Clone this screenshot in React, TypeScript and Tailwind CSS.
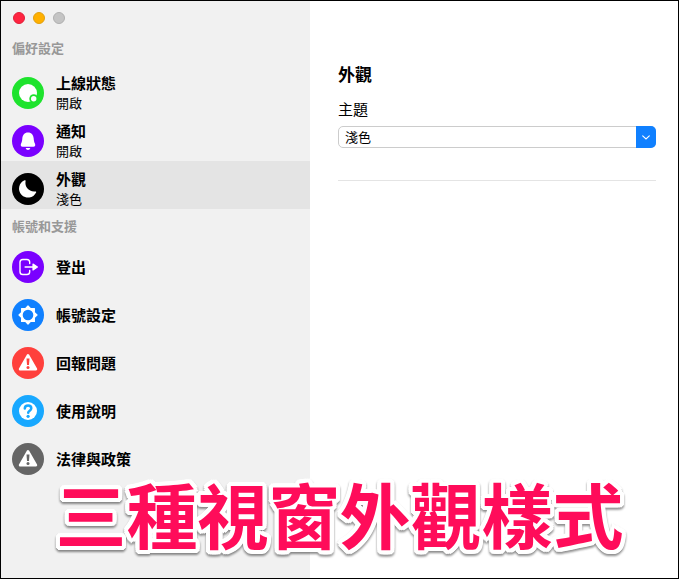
import { useState } from "react";
import type { ReactNode } from "react";

type SettingItem = {
  id: string;
  title: string;
  status?: string;
  color: string;
  icon: ReactNode;
};

const WarningIcon = () => (
  <svg viewBox="0 0 32 32" className="size-8" aria-hidden="true">
    <path
      d="M16 8.2 24 22.2H8Z"
      fill="white"
      stroke="white"
      strokeWidth="2.4"
      strokeLinejoin="round"
    />
    <path d="M14.5 11.5h3l-.5 6.6h-2z" fill="currentColor" />
    <circle cx="16" cy="20.5" r="1.5" fill="currentColor" />
  </svg>
);

const preferences: SettingItem[] = [
  {
    id: "active",
    title: "上線狀態",
    status: "開啟",
    color: "bg-[#1ee32d] text-[#1ee32d]",
    icon: (
      <svg viewBox="0 0 32 32" className="size-8" aria-hidden="true">
        <circle cx="16" cy="16" r="9" fill="white" />
        <circle cx="21.7" cy="21.7" r="4.4" fill="currentColor" />
        <circle cx="21.7" cy="21.7" r="2.7" fill="white" />
      </svg>
    ),
  },
  {
    id: "notifications",
    title: "通知",
    status: "開啟",
    color: "bg-[#7a00ff] text-[#7a00ff]",
    icon: (
      <svg viewBox="0 0 32 32" className="size-8" aria-hidden="true">
        <path
          d="M16 7.4c-3.6 0-5.5 2.6-5.7 6.2-.1 2.4-.5 3.5-1.2 5-.8 1.8-.3 3.2 1.5 3.2h10.8c1.8 0 2.3-1.4 1.5-3.2-.7-1.5-1.1-2.6-1.2-5-.2-3.6-2.1-6.2-5.7-6.2Z"
          fill="white"
        />
        <path d="M13.7 23h4.6c-.3 1.3-1.2 2-2.3 2s-2-.7-2.3-2Z" fill="white" />
      </svg>
    ),
  },
  {
    id: "appearance",
    title: "外觀",
    status: "淺色",
    color: "bg-black text-black",
    icon: (
      <svg viewBox="0 0 32 32" className="size-8" aria-hidden="true">
        <path
          d="M12.6 7.3c.6-.3 1.2.2 1 .8-1.2 5.9 3.4 11.2 9.8 10.4.6-.1 1 .5.7 1.1a9 9 0 1 1-11.5-12.3Z"
          fill="white"
        />
      </svg>
    ),
  },
];

const account: SettingItem[] = [
  {
    id: "logout",
    title: "登出",
    color: "bg-[#7a00ff] text-[#7a00ff]",
    icon: (
      <svg viewBox="0 0 32 32" className="size-8" aria-hidden="true">
        <path
          d="M17.7 12.5v-1.2c0-1.9-1-2.8-2.8-2.8h-4.1c-1.9 0-2.8 1-2.8 2.8v9.4c0 1.9 1 2.8 2.8 2.8h4.1c1.9 0 2.8-1 2.8-2.8v-1.2"
          fill="none"
          stroke="white"
          strokeWidth="1.4"
          strokeLinecap="round"
        />
        <path d="M13.2 16H22" stroke="white" strokeWidth="1.6" strokeLinecap="round" />
        <path
          d="m21 13 4.4 3-4.4 3Z"
          fill="white"
          stroke="white"
          strokeWidth="1.2"
          strokeLinejoin="round"
        />
      </svg>
    ),
  },
  {
    id: "settings",
    title: "帳號設定",
    color: "bg-[#1080ff] text-[#1080ff]",
    icon: (
      <svg viewBox="0 0 32 32" className="size-8" aria-hidden="true">
        <path
          d="m16 7 2.6 2.7 3.8-.1-.1 3.8L25 16l-2.7 2.6.1 3.8-3.8-.1L16 25l-2.6-2.7-3.8.1.1-3.8L7 16l2.7-2.6-.1-3.8 3.8.1Z"
          fill="white"
          stroke="white"
          strokeWidth="1.2"
          strokeLinejoin="round"
        />
        <circle cx="16" cy="16" r="5.3" fill="currentColor" />
      </svg>
    ),
  },
  {
    id: "report",
    title: "回報問題",
    color: "bg-[#ff403c] text-[#ff403c]",
    icon: <WarningIcon />,
  },
  {
    id: "help",
    title: "使用說明",
    color: "bg-[#18a8ff] text-[#18a8ff]",
    icon: (
      <svg viewBox="0 0 32 32" className="size-8" aria-hidden="true">
        <circle cx="16" cy="16" r="9" fill="white" />
        <path
          d="M12.8 13.5c0-1.9 1.4-3 3.3-3 1.8 0 3.2 1.1 3.2 2.8 0 2.4-3.1 2.3-3.1 4.5"
          fill="none"
          stroke="currentColor"
          strokeWidth="2.5"
          strokeLinecap="round"
        />
        <circle cx="16.1" cy="21.3" r="1.6" fill="currentColor" />
      </svg>
    ),
  },
  {
    id: "legal",
    title: "法律與政策",
    color: "bg-[#656565] text-[#656565]",
    icon: <WarningIcon />,
  },
];

function SettingRow({
  item,
  selected,
  onSelect,
}: {
  item: SettingItem;
  selected: boolean;
  onSelect: () => void;
}) {
  return (
    <li>
      <button
        type="button"
        onClick={onSelect}
        className={`flex h-12 w-full gap-3 pl-[11px] text-left ${
          item.status ? "items-end" : "items-center"
        } ${selected ? "bg-[#e4e4e4]" : ""}`}
      >
        <span className={`size-8 shrink-0 rounded-full ${item.color} ${item.status ? "mb-1" : ""}`}>
          {item.icon}
        </span>
        <span className="flex flex-col">
          <span className="text-[15px] leading-5 font-bold">{item.title}</span>
          {item.status && <span className="text-[13px] leading-5">{item.status}</span>}
        </span>
      </button>
    </li>
  );
}

export default function App() {
  const [selected, setSelected] = useState("appearance");
  const [theme, setTheme] = useState("淺色");

  const renderItems = (items: SettingItem[]) => (
    <ul>
      {items.map((item) => (
        <SettingRow
          key={item.id}
          item={item}
          selected={item.id === selected}
          onSelect={() => setSelected(item.id)}
        />
      ))}
    </ul>
  );

  return (
    <div className="relative flex min-h-screen overflow-hidden border border-black bg-white font-['Noto_Sans_CJK_TC',sans-serif] text-black">
      <aside className="w-[309px] shrink-0 bg-[#f1f1f1]">
        <div className="flex gap-2 px-3 pt-[11px] pb-2">
          <button type="button" aria-label="關閉" className="size-3 rounded-full border border-[#e0203a] bg-[#ff2440]" />
          <button type="button" aria-label="縮到最小" className="size-3 rounded-full border border-[#e0a010] bg-[#ffb000]" />
          <button type="button" aria-label="縮放" className="size-3 rounded-full border border-[#b0b0b0] bg-[#c4c4c4]" />
        </div>
        <h2 className="h-[33px] pl-[11px] text-[13px] leading-8 font-bold text-[#989898]">偏好設定</h2>
        {renderItems(preferences)}
        <h2 className="h-[34px] pl-[11px] text-[13px] leading-[34px] font-bold text-[#989898]">帳號和支援</h2>
        {renderItems(account)}
      </aside>

      <main className="min-w-0 flex-1 pt-[61px] pr-[22px] pl-7">
        <h1 className="text-[17px] leading-6 font-bold">外觀</h1>
        <label htmlFor="theme" className="mt-[13px] block text-[15px] leading-5">
          主題
        </label>
        <div className="relative mt-[7px]">
          <select
            id="theme"
            value={theme}
            onChange={(e) => setTheme(e.target.value)}
            className="block h-[22px] w-full appearance-none rounded-[5px] border border-[#cccccc] bg-white pr-6 pl-1.5 text-[13px] leading-5"
          >
            <option>淺色</option>
            <option>深色</option>
            <option>系統</option>
          </select>
          <span className="pointer-events-none absolute inset-y-0 right-0 flex w-5 items-center justify-center rounded-r-[5px] bg-[#1080ff]">
            <svg viewBox="0 0 8 5" className="h-[5px] w-2" aria-hidden="true">
              <path d="m.7.9 3.3 3L7.3.9" fill="none" stroke="white" strokeWidth="1.1" strokeLinecap="round" />
            </svg>
          </span>
        </div>
        <hr className="mt-8 border-[#e4e4e4]" />
      </main>

      <p className="pointer-events-none absolute inset-x-0 bottom-[30px] text-center text-[71px] leading-[72px] font-bold whitespace-nowrap text-[#ff0c5a] drop-shadow-[0_2px_1px_rgba(0,0,0,0.45)] [-webkit-text-stroke:5px_white] [paint-order:stroke_fill] [text-shadow:4px_0_white,-4px_0_white,0_4px_white,0_-4px_white,3px_3px_white,-3px_3px_white,3px_-3px_white,-3px_-3px_white,4px_2px_white,-4px_2px_white,4px_-2px_white,-4px_-2px_white,2px_4px_white,-2px_4px_white,2px_-4px_white,-2px_-4px_white]">
        三種視窗外觀樣式
      </p>
    </div>
  );
}
